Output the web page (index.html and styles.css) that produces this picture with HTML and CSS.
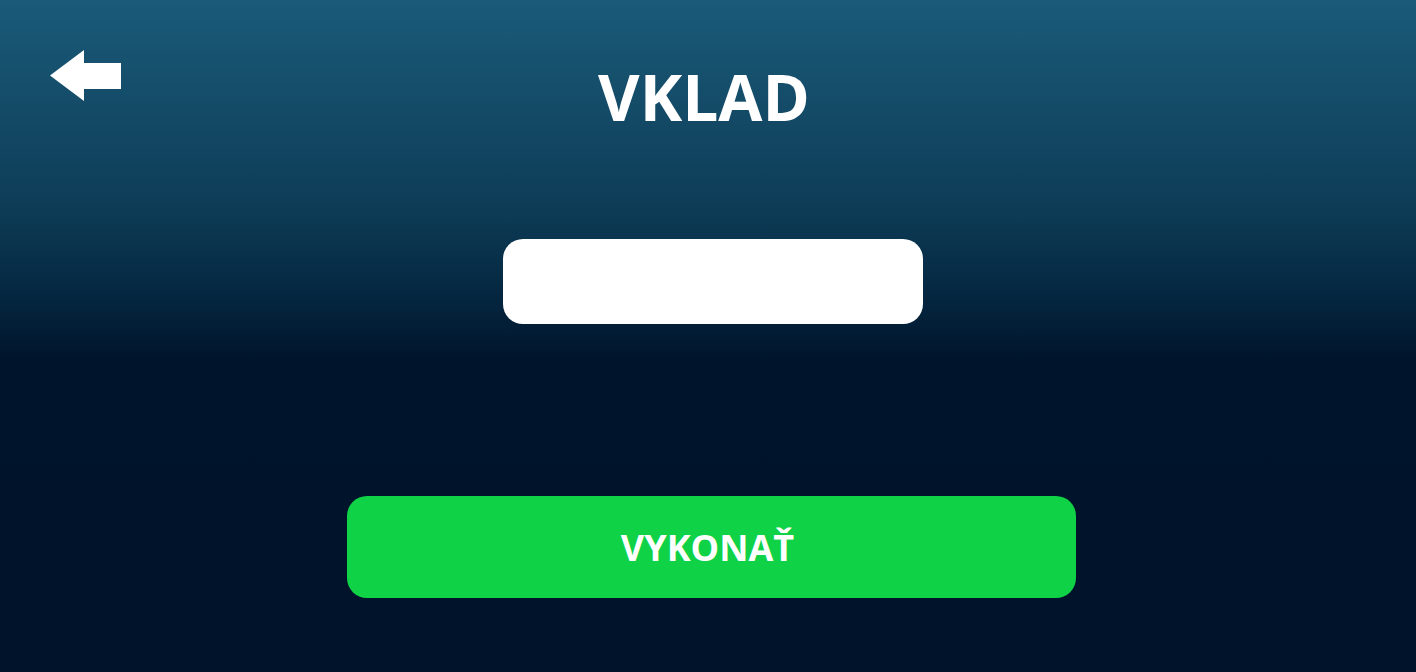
FILE: index.html
```html
<!DOCTYPE html>
<html lang="sk">
<head>
<meta charset="utf-8">
<title>Vklad</title>
<link rel="stylesheet" href="styles.css">
</head>
<body>
<div class="screen">
  <header class="top">
    <button class="back" aria-label="Späť">
      <svg width="72" height="52" viewBox="0 0 72 52"><polygon points="0,25.5 34,0 34,13 71,13 71,39 34,39 34,51" fill="#fff"/></svg>
    </button>
    <h1 class="title">VKLAD</h1>
  </header>
  <div class="field-row">
    <input class="amount" type="text" aria-label="Suma">
  </div>
  <div class="action-row">
    <button class="submit">VYKONAŤ</button>
  </div>
</div>
</body>
</html>
```
FILE: styles.css
```css
html, body {
  margin: 0;
  padding: 0;
  height: 100%;
}
body {
  background: linear-gradient(to bottom, #1a5b79 0%, #0e3d58 30%, #062a44 42%, #00142b 54%, #00132a 100%);
  font-family: "Open Sans", "Noto Sans", sans-serif;
  color: #fff;
  overflow: hidden;
}
.screen {
  width: 1416px;
  height: 672px;
  display: flex;
  flex-direction: column;
}
.top {
  position: relative;
  height: 239px;
  display: flex;
  justify-content: center;
  padding-right: 8px;
  box-sizing: border-box;
}
.back {
  position: absolute;
  left: 50px;
  top: 50px;
  padding: 0;
  border: 0;
  background: none;
  line-height: 0;
}
.title {
  margin: 54px 0 0 0;
  font-size: 64px;
  font-weight: 700;
  line-height: 86px;
  height: 86px;
}
.field-row {
  display: flex;
  justify-content: center;
  padding-left: 10px;
}
.amount {
  width: 420px;
  height: 85px;
  box-sizing: border-box;
  border: 0;
  border-radius: 20px;
  background: #fff;
  outline: none;
}
.action-row {
  display: flex;
  justify-content: center;
  padding-top: 172px;
  padding-left: 6px;
}
.submit {
  width: 729px;
  height: 102px;
  border: 0;
  border-radius: 20px;
  background: #10d246;
  color: #fff;
  font-family: "Open Sans", "Noto Sans", sans-serif;
  font-weight: 700;
  font-size: 36px;
  padding: 0 7px 0 0;
}
```
